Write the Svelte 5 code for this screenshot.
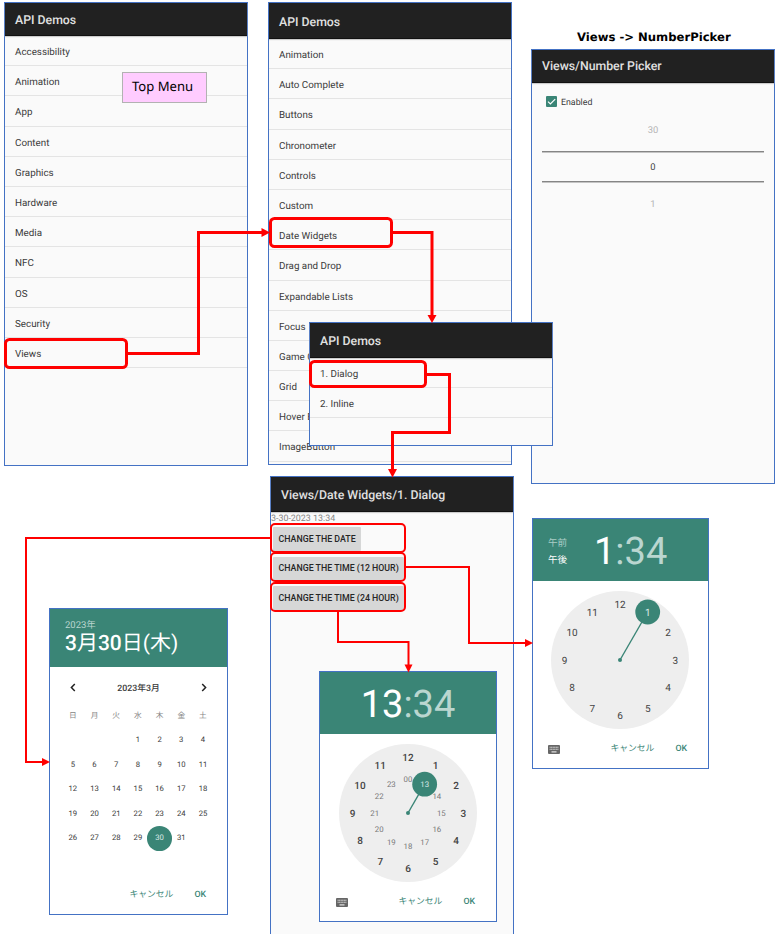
<script>
  const topMenu = ['Accessibility', 'Animation', 'App', 'Content', 'Graphics', 'Hardware', 'Media', 'NFC', 'OS', 'Security', 'Views'];
  const viewsMenu = ['Animation', 'Auto Complete', 'Buttons', 'Chronometer', 'Controls', 'Custom', 'Date Widgets', 'Drag and Drop', 'Expandable Lists', 'Focus', 'Game Controller Input', 'Grid', 'Hover Events', 'ImageButton'];
  const dateMenu = ['1. Dialog', '2. Inline'];
  const actions = ['CHANGE THE DATE', 'CHANGE THE TIME (12 HOUR)', 'CHANGE THE TIME (24 HOUR)'];
  const weekdays = ['日', '月', '火', '水', '木', '金', '土'];
  const days = ['', '', '', ...Array.from({ length: 31 }, (_, i) => i + 1)];

  function ring(labels, radius) {
    return labels.map((label, i) => {
      const a = (i * Math.PI) / 6;
      return { label, x: 69 + radius * Math.sin(a), y: 69 - radius * Math.cos(a) };
    });
  }
  const outer = ring([12, 1, 2, 3, 4, 5, 6, 7, 8, 9, 10, 11], 55.4);
  const inner = ring(['00', 13, 14, 15, 16, 17, 18, 19, 20, 21, 22, 23], 33.3);
</script>

{#snippet list(items)}
  <ul>
    {#each items as item}<li>{item}</li>{/each}
  </ul>
{/snippet}

{#snippet clock(is24)}
  {@const picked = is24 ? inner[1] : outer[1]}
  <svg class="clock" width="138" height="138" viewBox="0 0 138 138">
    <circle cx="69" cy="69" r="69" fill="#eeeeee" />
    {#each outer as n}
      <text class="hour" class:strong={is24} x={n.x} y={n.y + 3.7}>{n.label}</text>
    {/each}
    {#if is24}
      {#each inner as n}<text class="small" x={n.x} y={n.y + 2.7}>{n.label}</text>{/each}
    {/if}
    <line x1="69" y1="69" x2={picked.x} y2={picked.y} stroke="#3a8576" stroke-width="1.4" />
    <circle cx="69" cy="69" r="2" fill="#3a8576" />
    <circle cx={picked.x} cy={picked.y} r="12.4" fill="#3a8576" />
    <text class={is24 ? 'small picked' : 'hour picked'} x={picked.x} y={picked.y + (is24 ? 2.7 : 3.7)}>{picked.label}</text>
  </svg>
{/snippet}

{#snippet clockFooter()}
  <footer>
    <svg class="keyboard" width="12" height="9" viewBox="0 0 12 9">
      <rect width="12" height="9" rx="1" fill="#666" />
      <path d="M1.6 2.3H10.4M1.6 4.3H10.4" stroke="#ddd" stroke-width="1.1" stroke-dasharray="1.1 .44" />
      <path d="M3.5 6.9H8.5" stroke="#eee" stroke-width="1.1" />
    </svg>
    <span class="cancel">キャンセル</span><b>OK</b>
  </footer>
{/snippet}

<main>
  <section class="window top"><header>API Demos</header>{@render list(topMenu)}</section>
  <div class="note">Top Menu</div>

  <section class="window views"><header>API Demos</header>{@render list(viewsMenu)}</section>

  <h1>Views -&gt; NumberPicker</h1>
  <section class="window picker">
    <header>Views/Number Picker</header>
    <div class="check">
      <svg width="11" height="11" viewBox="0 0 11 11">
        <rect width="11" height="11" rx="1" fill="#3a8576" />
        <path d="M2 5.6L4.4 8L9.2 3.1" fill="none" stroke="#fff" stroke-width="1.2" />
      </svg>
      <span>Enabled</span>
    </div>
    <div class="spinner"><span>30</span><span class="current">0</span><span class="next">1</span></div>
  </section>

  <section class="window date"><header>API Demos</header>{@render list(dateMenu)}</section>

  <section class="window dialog">
    <header>Views/Date Widgets/1. Dialog</header>
    <p>3-30-2023 13:34</p>
    <div class="actions">
      {#each actions as action}<button>{action}</button>{/each}
    </div>
  </section>

  <section class="modal calendar">
    <header><small>2023年</small><strong>3<i>月</i>30<i>日(木)</i></strong></header>
    <nav>
      <svg width="6" height="9" viewBox="0 0 6 9"><path d="M4.8 1L1.4 4.5L4.8 8" /></svg>
      <span>2023年3月</span>
      <svg width="6" height="9" viewBox="0 0 6 9"><path d="M1.2 1L4.6 4.5L1.2 8" /></svg>
    </nav>
    <div class="grid week">{#each weekdays as day}<span>{day}</span>{/each}</div>
    <div class="grid days">{#each days as day}<span class:today={day === 30}>{day}</span>{/each}</div>
    <footer><span class="cancel">キャンセル</span><b>OK</b></footer>
  </section>

  <section class="modal time half">
    <header>
      <div class="ampm"><span>午前</span><span class="on">午後</span></div>
      <div class="digits"><b>1</b>:34</div>
    </header>
    {@render clock(false)}
    {@render clockFooter()}
  </section>

  <section class="modal time full">
    <header><div class="digits"><b>13</b>:34</div></header>
    {@render clock(true)}
    {@render clockFooter()}
  </section>

  <svg class="links" width="782" height="934" viewBox="0 0 782 934">
    <g stroke-width="3">
      <rect x="5.5" y="339.5" width="121" height="28" rx="4" />
      <path d="M128 353.5H198.5V232.5H263" />
      <rect x="270.5" y="218.5" width="121" height="28" rx="4" />
      <path d="M393 232.5H432V316" />
      <rect x="310.5" y="361.5" width="115" height="25" rx="4" />
      <path d="M427 374.5H449.5V432.5H392.5V470" />
    </g>
    <g stroke-width="2">
      <rect x="271" y="524" width="134" height="28" rx="4" />
      <rect x="271" y="553" width="134" height="28" rx="4" />
      <rect x="271" y="583" width="134" height="28" rx="4" />
      <path d="M270 538H26V762H43M406 567H469V643H526M338 612V642H408.5V666" />
    </g>
    <g class="tips">
      <path d="M261.5 228V237L270 232.5zM427.5 315H436.5L432 323zM388 469H397L392.5 477.5z" />
      <path d="M42 758V766L50 762zM525 639V647L533 643zM404.5 664.5H412.5L408.5 672.5z" />
    </g>
  </svg>
</main>

<style>
  main {
    position: relative;
    width: 782px;
    height: 934px;
    overflow: hidden;
    background: #fff;
    color: #3b3b3b;
    font-family: Roboto, "Noto Sans CJK JP", sans-serif;
    text-rendering: geometricPrecision;
    white-space: nowrap;
  }
  section, .note, h1, .links { position: absolute; box-sizing: border-box; }
  section { border: 1px solid #4472c4; display: flex; flex-direction: column; }
  .window { width: 244px; background: #fafafa; }
  .window > header {
    flex: none;
    box-sizing: border-box;
    height: 35px;
    padding-left: 10px;
    line-height: 35px;
    background: #212121;
    border-bottom: 1px solid #111;
    box-shadow: 0 1px 1px #ccc;
    color: #e0e0e0;
    font-size: 12.3px;
    font-weight: 500;
  }
  ul { margin: 0; padding: 0; list-style: none; }
  li {
    box-sizing: border-box;
    height: 30.2px;
    padding-left: 10px;
    line-height: 33px;
    border-bottom: 1px solid #e4e4e4;
    font-size: 9.8px;
  }
  .top { left: 4px; top: 2px; height: 464px; }
  .top > header { height: 33px; line-height: 36px; }
  .top li { line-height: 34px; }
  .views { left: 268px; top: 2px; height: 463px; overflow: hidden; }
  .views > header { height: 36px; line-height: 41px; }
  .picker { left: 531px; top: 49px; height: 435px; }
  .picker > header { height: 33px; line-height: 34px; }
  .date { left: 309px; top: 322px; height: 124px; }
  .date > header { line-height: 39px; }
  .dialog { left: 270px; top: 476px; height: 460px; }
  .dialog > header { line-height: 39px; }
  .note {
    left: 122px;
    top: 72px;
    width: 85px;
    height: 31px;
    border: 1px solid #b2b2b2;
    background: #fcf;
    color: #000;
    font: 13.1px/27px "Noto Sans", sans-serif;
    padding-left: 9px;
  }
  h1 {
    left: 577px;
    top: 30px;
    margin: 0;
    color: #000;
    font: bold 11.65px/15px "DejaVu Sans", sans-serif;
  }
  .check { display: flex; align-items: center; gap: 4px; height: 11px; padding: 13px 0 0 14px; font-size: 8.8px; line-height: 12px; }
  .check span { padding-top: 2px; }
  .spinner { display: flex; flex-direction: column; padding: 4px 10px 0; font-size: 9.4px; text-align: center; color: #b5b5b5; }
  .spinner span { line-height: 40px; height: 40px; }
  .spinner .current { height: 29px; line-height: 32px; border: solid #858585; border-width: 1.5px 0; box-shadow: 0 1px #c4c4c4, inset 0 1px #c4c4c4; color: #444; }
  .spinner .next { line-height: 45px; }
  p { margin: 0; height: 13px; line-height: 14px; font-size: 8.9px; color: #858585; }
  .actions { display: flex; flex-direction: column; align-items: flex-start; gap: 6px; padding: 2px 0 0 2px; }
  button {
    height: 23.6px;
    padding: 0 5.5px;
    border: 0;
    border-radius: 1px;
    background: #d6d7d7;
    color: #262626;
    font: 500 8.8px Roboto, sans-serif;
  }
  .modal { background: #fff; }
  .modal > header { flex: none; background: #3a8576; color: #fff; }
  footer { display: flex; align-items: center; height: 12px; color: #3a8576; font-size: 8.8px; line-height: 12px; font-weight: 500; }
  footer b { margin-left: 21px; font-weight: 500; }
  .cancel { margin-left: auto; font-weight: 400; }
  .calendar { left: 49px; top: 608px; width: 179px; height: 307px; }
  .calendar > header { display: flex; flex-direction: column; box-sizing: border-box; height: 58px; padding: 10px 0 0 15px; }
  small { font-size: 9.5px; line-height: 13px; color: #bad6d0; }
  strong { font-size: 21px; line-height: 24px; font-weight: 500; }
  i { font-style: normal; font-weight: 400; }
  nav { display: flex; justify-content: space-between; align-items: center; height: 12px; padding: 14px 20px 1px; font-size: 8.8px; font-weight: 500; }
  nav path { fill: none; stroke: #222; stroke-width: 1.5; }
  .grid { display: grid; grid-template-columns: repeat(7, 21.7px); padding-left: 12px; text-align: center; font-size: 7.7px; }
  .week { margin-top: 15px; line-height: 14px; color: #858585; }
  .days { margin-top: 5px; grid-auto-rows: 24.6px; line-height: 24.9px; }
  .today { width: 24.6px; margin-left: -1.5px; border-radius: 50%; background: #3a8576; color: #dceae7; }
  .calendar footer { margin: auto 21px 13px 0; }
  .time { height: 251px; }
  .time > header { display: flex; align-items: center; height: 62px; }
  .digits { padding-top: 3px; font-size: 38px; line-height: 62px; font-weight: 400; color: #bad6d0; }
  .digits b { font-weight: 400; color: #fff; }
  .clock { flex: none; margin-top: 10px; align-self: center; }
  .time footer { margin: 14px 21px 0 15px; }
  .half { left: 532px; top: 518px; width: 177px; }
  .half > .clock { margin-left: -1px; }
  .ampm { display: flex; flex-direction: column; width: 46px; padding: 5px 0 0 15px; font-size: 9.6px; line-height: 16.5px; color: #aacdc6; }
  .ampm .on { color: #fff; }
  .full { left: 319px; top: 671px; width: 178px; }
  .full footer { margin-left: 16px; }
  .full > header { justify-content: center; }
  text { text-anchor: middle; fill: #444; }
  .hour { font-size: 10px; }
  .strong { font-weight: 500; }
  .small { font-size: 7.8px; fill: #777; }
  .picked { fill: #dceae7; }
  .links { left: 0; top: 0; fill: none; stroke: #f00; pointer-events: none; }
  .tips { fill: #f00; stroke: none; }
</style>
